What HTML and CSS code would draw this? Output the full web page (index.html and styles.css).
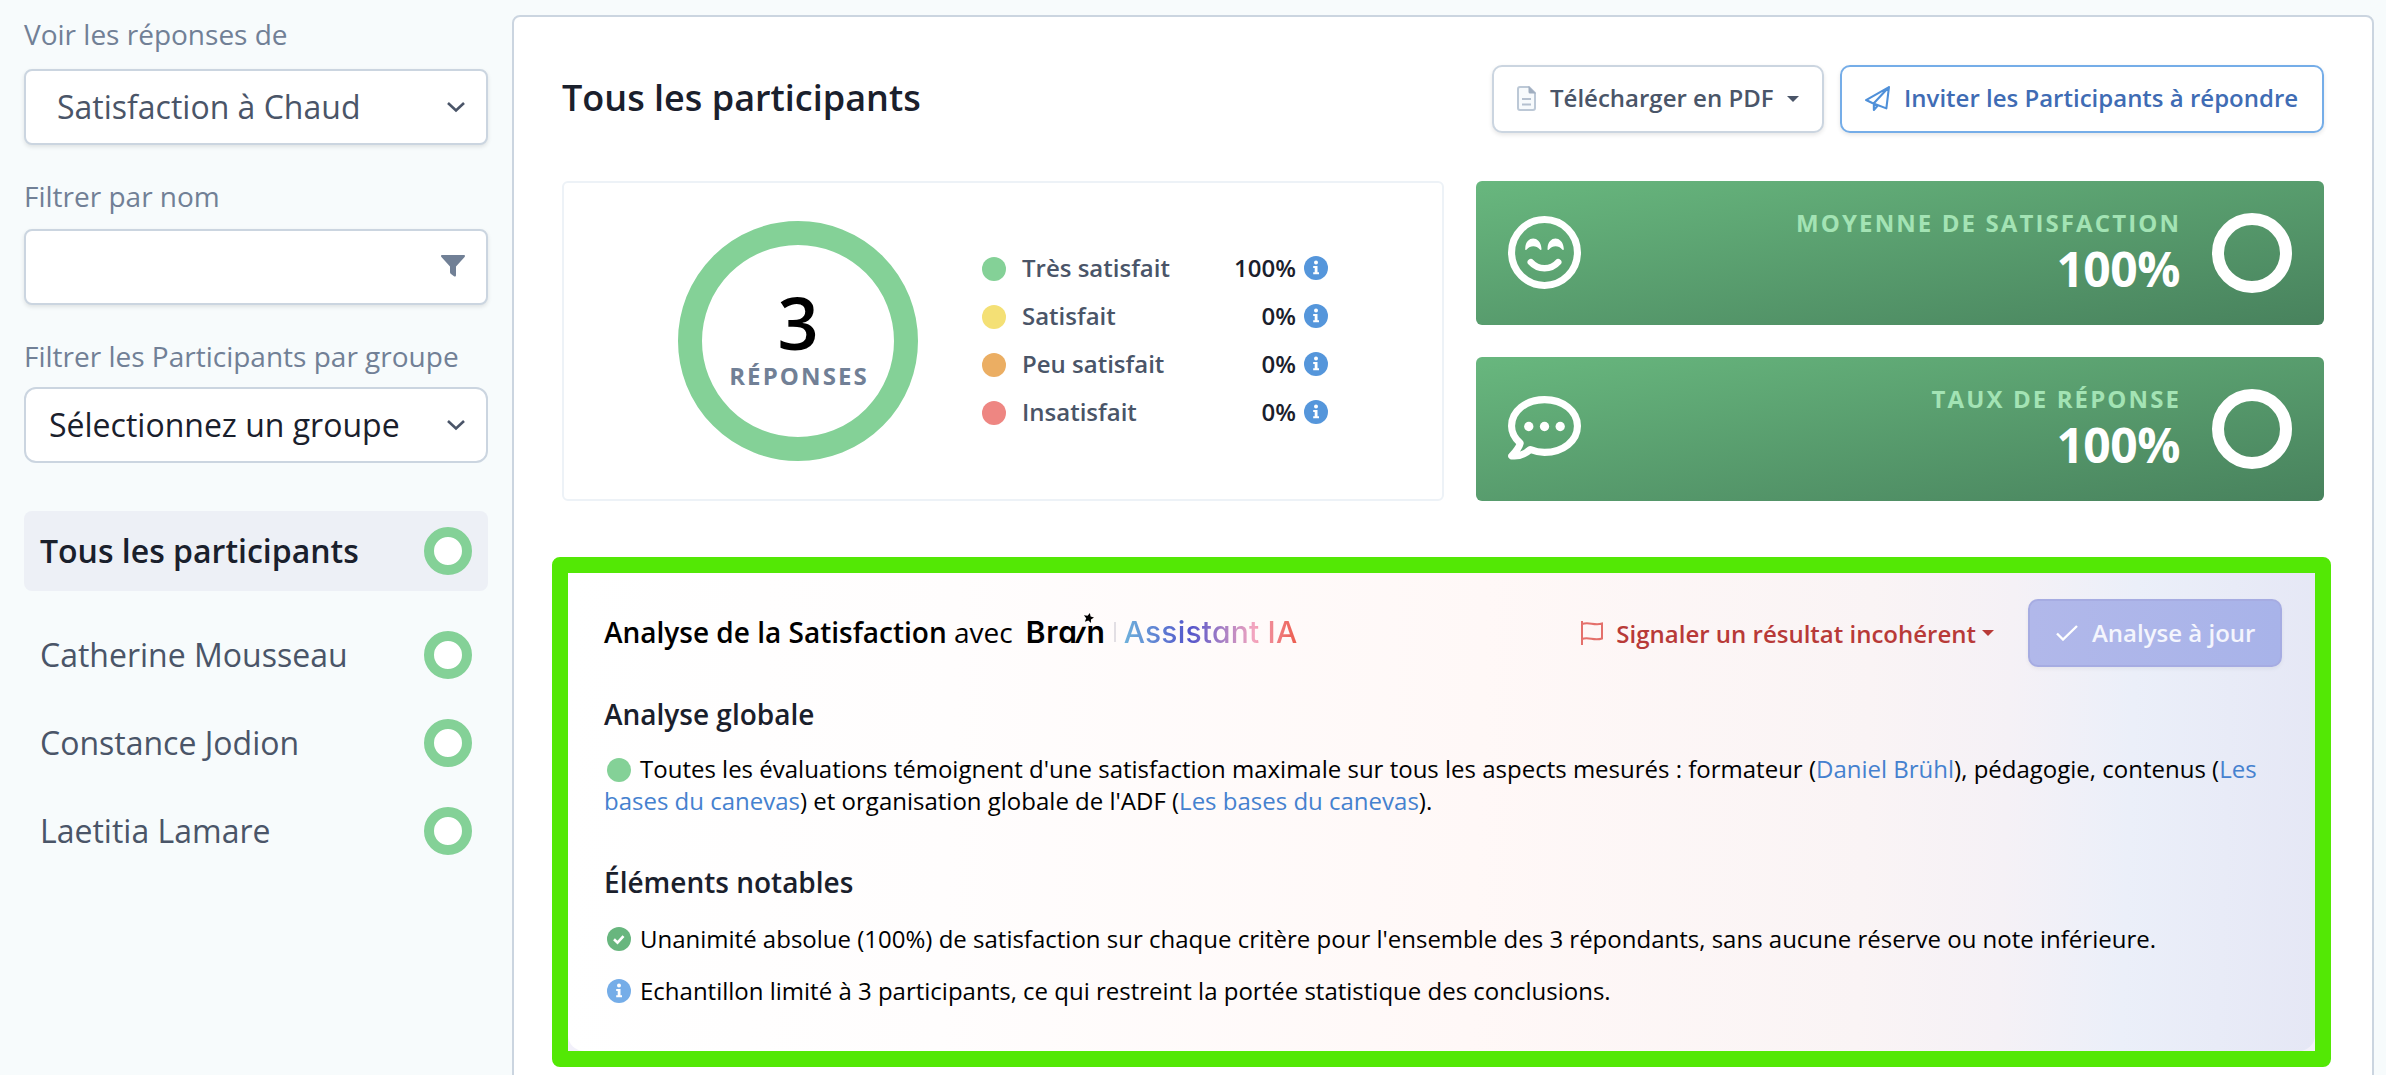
FILE: index.html
```
<!DOCTYPE html>
<html lang="fr">
<head>
  <meta charset="UTF-8"/>
  <meta name="viewport" content="width=device-width, initial-scale=1"/>
  <title>Satisfaction à Chaud</title>
  <link rel="stylesheet" href="styles.css">
</head>
<body>

  <!-- shared icons -->
  <svg class="sprite" xmlns="http://www.w3.org/2000/svg">
    <symbol id="chevron" viewBox="0 0 20 12"><path d="M2 2 L10 9.5 L18 2" fill="none" stroke="currentColor" stroke-width="2.6"/></symbol>
    <symbol id="info" viewBox="0 0 24 24"><circle cx="12" cy="12" r="12" fill="currentColor"/><circle cx="12" cy="6.6" r="2" fill="#fff"/><path d="M9.2 10h4.3v6.2h1.5v2H9.2v-2h1.5v-4.2H9.2z" fill="#fff"/></symbol>
    <symbol id="caret" viewBox="0 0 12 6"><path d="M0 0h12L6 6z" fill="currentColor"/></symbol>
  </svg>

  <div class="layout">
    <aside class="sidebar">
      <label class="label">Voir les réponses de</label>
      <div class="field select survey"><span>Satisfaction à Chaud</span><svg class="chevron"><use href="#chevron"/></svg></div>

      <label class="label">Filtrer par nom</label>
      <div class="field name"><svg class="funnel" viewBox="0 0 24 22"><path d="M1 0h22c1 0 1.300 1.200.6 2L15 11.500V20c0 1.400-1 2-2 1.300L10 19c-.6-.4-1-1-1-1.700v-5.800L.4 2C-.3 1.200 0 0 1 0z" fill="#718096"/></svg></div>

      <label class="label">Filtrer les Participants par groupe</label>
      <div class="field select group"><span>Sélectionnez un groupe</span><svg class="chevron"><use href="#chevron"/></svg></div>

      <ul class="people">
        <li class="active"><span>Tous les participants</span><i class="ring"></i></li>
        <li><span>Catherine Mousseau</span><i class="ring"></i></li>
        <li><span>Constance Jodion</span><i class="ring"></i></li>
        <li><span>Laetitia Lamare</span><i class="ring"></i></li>
      </ul>
    </aside>

    <main class="panel">
      <header class="panel-header">
        <h1>Tous les participants</h1>
        <div class="actions">
          <button class="btn pdf">
            <svg class="file" viewBox="0 0 19 25"><path d="M3 1h9l6 6v15a2 2 0 0 1-2 2H3a2 2 0 0 1-2-2V3a2 2 0 0 1 2-2z" fill="#f7fafc" stroke="#bcc8d6" stroke-width="2"/><path d="M11.500 0L19 7.500h-6a1.500 1.500 0 0 1-1.500-1.500z" fill="#a0aec0"/><path d="M5 13h9M5 18.500h9" stroke="#b4c0cf" stroke-width="2"/></svg>
            <span>Télécharger en PDF</span>
            <svg class="caret"><use href="#caret"/></svg>
          </button>
          <button class="btn invite">
            <svg class="plane" viewBox="0 0 24 24" fill="none" stroke="#4f90d9" stroke-width="2" stroke-linejoin="round"><path d="M23 1L1 13.500l6 2.800L20.500 21.500zM23 1L8.500 16.500V23l4-4.500"/></svg>
            <span>Inviter les Participants à répondre</span>
          </button>
        </div>
      </header>

      <section class="stats">
        <div class="breakdown">
          <div class="donut">
            <strong>3</strong>
            <span>RÉPONSES</span>
          </div>
          <ul class="legend">
            <li><i class="dot green"></i><span>Très satisfait</span><b>100%</b><svg class="info"><use href="#info"/></svg></li>
            <li><i class="dot yellow"></i><span>Satisfait</span><b>0%</b><svg class="info"><use href="#info"/></svg></li>
            <li><i class="dot orange"></i><span>Peu satisfait</span><b>0%</b><svg class="info"><use href="#info"/></svg></li>
            <li><i class="dot red"></i><span>Insatisfait</span><b>0%</b><svg class="info"><use href="#info"/></svg></li>
          </ul>
        </div>

        <div class="kpis">
          <div class="kpi">
            <svg class="kpi-icon" viewBox="0 0 72 72" fill="none" stroke="#fff" stroke-linecap="round">
              <circle cx="36" cy="36" r="32.500" stroke-width="7"/>
              <path d="M22.500 45.500c7 8 20 8 27 0" stroke-width="6.500"/>
              <path d="M17 32c.5-13 15-13 16 0 .2 1.800-1 1.800-1.800.8-3-4-9.500-4-12.500 0-.8 1-1.900 1-1.700-.8zM39 32c.5-13 15-13 16 0 .2 1.800-1 1.800-1.800.8-3-4-9.500-4-12.500 0-.8 1-1.900 1-1.700-.8z" fill="#fff" stroke="none"/>
            </svg>
            <div class="kpi-text"><span>MOYENNE DE SATISFACTION</span><strong>100%</strong></div>
            <i class="kpi-ring"></i>
          </div>
          <div class="kpi">
            <svg class="kpi-icon" viewBox="0 0 72 72" fill="none" stroke="#fff">
              <path d="M36 7.500C17.500 7.500 3.500 19 3.500 33.500c0 6.500 3.500 12.500 8.500 17-1 4.500-4.500 8.500-8.300 12.500 6.300.8 13.300-2 18.300-6.300 4.500 1.800 9 2.800 14 2.800 18.500 0 32.500-11.500 32.500-26S54.500 7.500 36 7.500z" stroke-width="7" stroke-linejoin="round"/>
              <g fill="#fff" stroke="none"><circle cx="20.500" cy="34" r="4.600"/><circle cx="36" cy="34" r="4.600"/><circle cx="51.500" cy="34" r="4.600"/></g>
            </svg>
            <div class="kpi-text"><span>TAUX DE RÉPONSE</span><strong>100%</strong></div>
            <i class="kpi-ring"></i>
          </div>
        </div>
      </section>

      <section class="highlight">
        <div class="analysis">
          <div class="analysis-header">
            <h2>Analyse de la Satisfaction <span>avec</span></h2>
            <div class="brand">
              <span class="brain">Bra<em>ı</em>n<svg class="star" viewBox="0 0 12 12"><path d="M7.500 0l.8 3.700L12 5 8.700 7l.1 4-3-2.700L2 9.500l1.500-3.700L1 2.500l4 .6z"/></svg></span>
              <i class="bar"></i>
              <span class="assistant">Assistant IA</span>
            </div>
            <div class="report">
              <svg class="flag" viewBox="0 0 24 24" fill="none" stroke="#e4706b" stroke-width="2"><path d="M2 0v24M2 3c7-2.800 12 2 20-.5v15c-8 2.800-13-2-20 .5"/></svg>
              <span>Signaler un résultat incohérent</span>
              <svg class="caret"><use href="#caret"/></svg>
            </div>
            <button class="btn uptodate">
              <svg class="check" viewBox="0 0 22 16"><path d="M1 8.500l6 6L21 1" fill="none" stroke="#fff" stroke-width="2.400"/></svg>
              <span>Analyse à jour</span>
            </button>
          </div>

          <h3>Analyse globale</h3>
          <p class="summary"><i class="dot green"></i>Toutes les évaluations témoignent d'une satisfaction maximale sur tous les aspects mesurés : formateur (<a>Daniel Brühl</a>), pédagogie, contenus (<a>Les<br>bases du canevas</a>) et organisation globale de l'ADF (<a>Les bases du canevas</a>).</p>

          <h3>Éléments notables</h3>
          <ul class="notes">
            <li><svg class="note-icon" viewBox="0 0 24 24"><circle cx="12" cy="12" r="12" fill="#68b67e"/><path d="M7 12.300l3.500 3.400 6-6.500" fill="none" stroke="#fff" stroke-width="2.600"/></svg><span>Unanimité absolue (100%) de satisfaction sur chaque critère pour l'ensemble des 3 répondants, sans aucune réserve ou note inférieure.</span></li>
            <li><svg class="note-icon light"><use href="#info"/></svg><span>Echantillon limité à 3 participants, ce qui restreint la portée statistique des conclusions.</span></li>
          </ul>
        </div>
      </section>
    </main>
  </div>

</body>
</html>
```
FILE: styles.css
```
/* --- Reset & Body --- */
* { box-sizing: border-box; margin: 0; padding: 0; }
html, body { width: 100%; height: 100%; overflow: hidden; }
body {
  background: #f7fbfc;
  color: #1a202c;
  font-family: "Open Sans", "Noto Sans", sans-serif;
  font-size: 24px;
}
ul { list-style: none; }
i { display: block; }
svg { display: block; flex: none; }
span, strong, b { white-space: nowrap; }
.sprite { position: absolute; width: 0; height: 0; }

.layout { display: flex; align-items: flex-start; padding: 15px 0 0 24px; }

/* --- Sidebar --- */
.sidebar { width: 464px; margin-right: 24px; flex: none; }
.label {
  display: block;
  height: 40px; line-height: 38px;
  color: #718096;
  font-size: 28px;
}
.field {
  display: flex; align-items: center; justify-content: space-between;
  height: 76px;
  background: #fff;
  border: 2px solid #cbd5e0;
  border-radius: 8px;
  padding-right: 20px;
  font-size: 32px;
}
.field span, .people span { padding-bottom: 2px; }
.survey { margin: 14px 0 32px; padding-left: 31px; color: #4a5568; box-shadow: 0 2px 4px rgba(0,0,0,0.1); }
.name { margin: 12px 0 32px; padding-right: 21px; justify-content: flex-end; box-shadow: 0 2px 4px rgba(0,0,0,0.1); }
.group { margin-top: 10px; border-radius: 12px; padding-left: 23px; }
.chevron { width: 20px; height: 12px; color: #4a5568; }
.funnel { width: 24px; height: 22px; margin-bottom: 2px; }

.people { margin-top: 48px; font-size: 32px; color: #4a5568; }
.people li {
  display: flex; align-items: center; justify-content: space-between;
  height: 80px; margin-bottom: 8px; padding: 0 16px;
  border-radius: 8px;
}
.people .active { background: #edf0f6; margin-bottom: 24px; color: #1a202c; font-weight: 600; }
.ring { width: 48px; height: 48px; border: 10px solid #84d197; border-radius: 50%; background: #fff; }

/* --- Main panel --- */
.panel {
  width: 1862px; height: 1100px; flex: none;
  background: #fff;
  border: 2px solid #cbd5e0;
  border-radius: 8px;
  padding: 47px 48px 0;
}
.panel-header { display: flex; justify-content: space-between; align-items: center; height: 70px; }
h1 { font-size: 36px; font-weight: 600; line-height: 1; margin-bottom: 2px; }
.actions { display: flex; gap: 16px; }
.btn {
  display: flex; align-items: center;
  height: 68px;
  border: 2px solid #cbd5e0;
  border-radius: 10px;
  background: #fff;
  box-shadow: 0 2px 4px rgba(0,0,0,0.1);
  font: 600 24px "Open Sans", "Noto Sans", sans-serif;
  color: #4a5568;
}
.btn span { padding-bottom: 2px; }
.actions .btn { margin-bottom: 1px; }
.pdf { width: 332px; padding-left: 23px; }
.file { width: 19px; height: 25px; margin-right: 14px; }
.caret { width: 12px; height: 6px; }
.pdf .caret { margin-left: 13px; }
.invite { width: 484px; padding-left: 23px; border-color: #75ade8; color: #3f6cb4; }
.plane { width: 25px; height: 25px; margin-right: 14px; }

/* --- Stats --- */
.stats { display: flex; gap: 32px; margin-top: 47px; }
.breakdown {
  display: flex; align-items: center;
  width: 882px; height: 320px;
  border: 2px solid #edf2f7;
  border-radius: 6px;
  padding-left: 114px;
}
.donut {
  display: flex; flex-direction: column; align-items: center;
  width: 240px; height: 240px;
  padding-top: 31px;
  border: 24px solid #84d197;
  border-radius: 50%;
}
.donut strong { font-size: 72px; font-weight: 600; line-height: 92px; height: 83px; color: #000; }
.donut span { font-size: 24px; font-weight: 700; line-height: 34px; letter-spacing: 2.1px; color: #718096; margin-right: -2px; }
.legend { width: 346px; margin-left: 64px; }
.legend li { display: flex; align-items: center; height: 48px; font-size: 24px; font-weight: 600; color: #4a5568; }
.legend b { margin-left: auto; font-weight: 600; color: #1a202c; padding-bottom: 3px; }
.legend span { margin-left: 16px; padding-bottom: 3px; }
.info { width: 24px; height: 24px; margin: 0 0 2px 8px; color: #5596db; }
.dot { width: 24px; height: 24px; border-radius: 50%; }
.green { background: #84d197; }
.yellow { background: #f4e075; }
.orange { background: #ebae63; }
.red { background: #ee8682; }

.kpis { display: flex; flex-direction: column; gap: 32px; }
.kpi {
  display: flex; align-items: center;
  width: 848px; height: 144px;
  border-radius: 6px;
  padding: 0 32px;
  background: linear-gradient(to bottom right, #68b77e, #48825d);
}
.kpi-icon { width: 73px; height: 73px; margin-bottom: 2px; }
.kpi-text { display: flex; flex-direction: column; align-items: flex-end; margin-left: auto; margin-right: 32px; padding-bottom: 4px; color: #fff; }
.kpi-text span { font-size: 24px; font-weight: 700; line-height: 36px; letter-spacing: 2.1px; color: #a3e3b4; margin-right: -1px; }
.kpi-text strong { font-size: 48px; font-weight: 700; line-height: 56px; letter-spacing: -0.5px; }
.kpi-ring { width: 80px; height: 80px; border: 12px solid #fff; border-radius: 50%; }

/* --- AI analysis --- */
.highlight {
  margin: 56px -7px 0 -10px;
  height: 510px;
  border: 16px solid #53e805;
  border-radius: 8px;
  background: #f2f0fa;
}
.analysis {
  height: 100%;
  border-radius: 0 0 16px 16px;
  padding: 26px 33px 0 36px;
  background: linear-gradient(92deg, #fff 0%, #fffdfd 22%, #fff8f7 52%, #faf4f5 74%, #f5f1f6 82%, #ebeff9 89%, #e5e7f5 100%);
  color: #000;
}
.analysis-header { display: flex; align-items: center; height: 68px; }
h2 { font-size: 28px; font-weight: 600; white-space: nowrap; padding-bottom: 2px; }
h2 span { font-weight: 400; }
.brand {
  display: flex; align-items: center;
  margin-left: 13px;
  padding-bottom: 2px;
  font: 500 30px Inter, sans-serif;
  font-feature-settings: "cv11";
}
.brain { position: relative; font-weight: 600; letter-spacing: 0.8px; }
.brain em { display: inline-block; font-style: normal; transform: skewX(-24deg); }
.star { position: absolute; width: 11px; height: 11px; right: 12px; top: -1px; }
.bar { width: 2px; height: 20px; background: #e2dfe4; margin: 0 8px 0 8px; }
.assistant {
  letter-spacing: 0.2px;
  background: linear-gradient(90deg, #6eb1db 0%, #5355cb 38%, #f3a5bf 75%, #ec5c4d 100%);
  -webkit-background-clip: text; background-clip: text;
  color: transparent;
}
.report { display: flex; align-items: center; margin-left: auto; font-size: 24px; font-weight: 600; color: #b83a38; }
.flag { width: 24px; height: 24px; margin-right: 12px; }
.report .caret { margin-left: 6px; }
.uptodate {
  width: 254px; height: 68px; margin-left: 34px; padding-left: 26px;
  background: linear-gradient(to right, #b1b8ea, #a8b3e9);
  border-color: #a6ace2; color: #f4f5fd;
  box-shadow: 0 2px 4px rgba(0,0,0,0.05);
}
.check { width: 22px; height: 16px; margin-right: 14px; }

h3 { margin-top: 27px; height: 40px; font-size: 28px; line-height: 40px; font-weight: 600; color: #1a202c; }
.summary { margin-top: 19px; font-size: 24px; line-height: 32px; white-space: nowrap; }
.summary .dot { display: inline-block; vertical-align: -4px; margin: 0 9px 0 3px; }
.summary + h3 { margin-top: 45px; }
a { color: #4581cf; }
.notes { margin-top: 11px; }
.notes li { display: flex; align-items: center; height: 52px; font-size: 24px; padding-left: 3px; }
.notes span { padding-bottom: 2px; }
.note-icon { width: 24px; height: 24px; margin-right: 9px; }
.light { color: #75ade8; }
```
